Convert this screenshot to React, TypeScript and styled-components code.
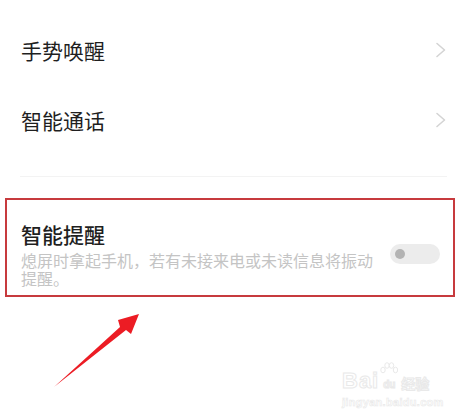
import React from "react";
import styled, { createGlobalStyle } from "styled-components";

const Global = createGlobalStyle`
  html, body { margin: 0; padding: 0; background: #ffffff; }
  body { width: 460px; height: 420px; overflow: hidden; font-family: "Noto Sans CJK SC", "Noto Sans", sans-serif; }
`;

const Page = styled.div`
  position: relative;
  width: 460px;
  height: 420px;
  display: flex;
  flex-direction: column;
  padding-top: 15px;
  box-sizing: border-box;
  background: #fff;
`;

const NavRow = styled.div`
  height: 70px;
  display: flex;
  align-items: center;
  justify-content: space-between;
  padding: 0 13px 0 21px;
`;

const RowLabel = styled.span<{ $strong?: boolean }>`
  font-size: 21px;
  line-height: 28px;
  color: #1f1f1f;
  font-weight: ${(p) => (p.$strong ? 500 : 400)};
`;

const Divider = styled.div`
  height: 1px;
  background: #f3f3f3;
  margin: 21px 13px 21px 20px;
`;

const Highlight = styled.div`
  margin: 0 5px;
  border: 2px solid #c73a3e;
  display: flex;
  align-items: center;
  gap: 14px;
  padding: 20px 13px 8px 14px;
`;

const TextBlock = styled.div`
  display: flex;
  flex-direction: column;
  gap: 3px;
  flex: 1;
`;

const Sub = styled.div`
  font-size: 16px;
  line-height: 18px;
  color: #c4c4c4;
`;

const Toggle = styled.div`
  width: 50px;
  height: 20px;
  border-radius: 10px;
  background: #ececec;
  display: flex;
  align-items: center;
  padding-left: 5px;
  box-sizing: border-box;
  flex-shrink: 0;
`;

const Knob = styled.div`
  width: 10px;
  height: 10px;
  border-radius: 50%;
  background: #b3b3b3;
`;

const Overlay = styled.svg`
  position: absolute;
  left: 0;
  top: 0;
  pointer-events: none;
`;

const Watermark = styled.div`
  position: absolute;
  left: 342px;
  top: 362px;
  display: flex;
  flex-direction: column;
  align-items: flex-start;
  color: #fff;
  -webkit-text-stroke: 1px #e9e9e9;
  font-family: "Liberation Sans", Arial, sans-serif;
  font-weight: 700;
`;

const MarkTop = styled.div`
  display: flex;
  align-items: flex-end;
  gap: 1px;
`;

const Bai = styled.span`
  font-size: 22px;
  line-height: 22px;
  letter-spacing: 1px;
`;

const Paw = styled.span`
  position: relative;
  width: 18px;
  height: 30px;
  display: flex;
  align-items: flex-end;
  justify-content: center;
  font-size: 10px;
  line-height: 14px;
`;

const Jy = styled.span`
  font-family: "Noto Sans CJK SC", sans-serif;
  font-size: 14px;
  line-height: 18px;
  font-weight: 700;
  margin-left: 2px;
`;

const Url = styled.span`
  font-size: 11px;
  line-height: 14px;
  margin-top: 3px;
  letter-spacing: 0.3px;
  -webkit-text-stroke: 0.6px #e9e9e9;
`;

const Chevron = () => (
  <svg width="12" height="16" viewBox="0 0 12 16">
    <path d="M2 1.5 L9.5 8 L2 14.5" fill="none" stroke="#d4d4d4" strokeWidth="1.6" strokeLinecap="round" strokeLinejoin="round" />
  </svg>
);

export default function App() {
  return (
    <>
      <Global />
      <Page>
        <NavRow>
          <RowLabel>手势唤醒</RowLabel>
          <Chevron />
        </NavRow>
        <NavRow>
          <RowLabel>智能通话</RowLabel>
          <Chevron />
        </NavRow>
        <Divider />
        <Highlight>
          <TextBlock>
            <RowLabel $strong>智能提醒</RowLabel>
            <Sub>熄屏时拿起手机，若有未接来电或未读信息将振动提醒。</Sub>
          </TextBlock>
          <Toggle>
            <Knob />
          </Toggle>
        </Highlight>
        <Overlay width="460" height="420" viewBox="0 0 460 420">
          <polygon points="54,387 120,327 118,320 139,314 131,334 126,330" fill="#ec1c24" />
        </Overlay>
        <Watermark>
          <MarkTop>
            <Bai>Bai</Bai>
            <Paw>
              <svg width="18" height="14" viewBox="0 0 18 14" style={{ position: "absolute", top: 0, left: 0 }}>
                <ellipse cx="3" cy="8" rx="2.2" ry="2.8" fill="#fff" stroke="#e9e9e9" />
                <ellipse cx="7" cy="3.5" rx="2.2" ry="2.8" fill="#fff" stroke="#e9e9e9" />
                <ellipse cx="11.5" cy="3.5" rx="2.2" ry="2.8" fill="#fff" stroke="#e9e9e9" />
                <ellipse cx="15.5" cy="8" rx="2.2" ry="2.8" fill="#fff" stroke="#e9e9e9" />
              </svg>
              du
            </Paw>
            <Jy>经验</Jy>
          </MarkTop>
          <Url>jingyan.baidu.com</Url>
        </Watermark>
      </Page>
    </>
  );
}
